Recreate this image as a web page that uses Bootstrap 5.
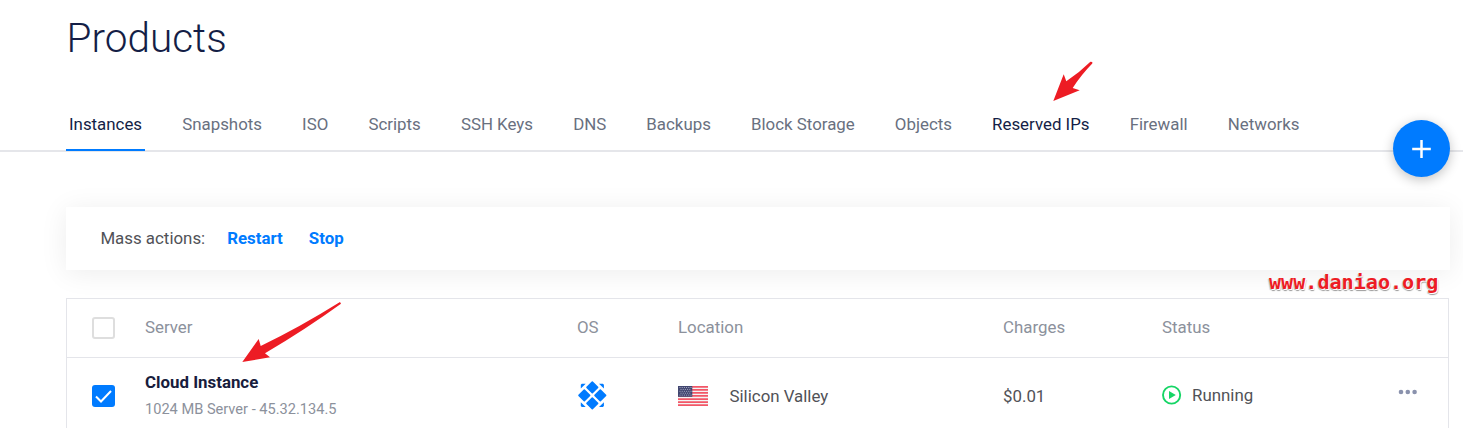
<!DOCTYPE html>
<html lang="en">
<head>
<meta charset="utf-8">
<title>Products</title>
<meta name="viewport" content="width=device-width, initial-scale=1">
<link href="https://cdn.jsdelivr.net/npm/bootstrap@5.3.0/dist/css/bootstrap.min.css" rel="stylesheet">
<style>
body{font-family:Roboto,sans-serif;font-size:16.87px;line-height:24px;color:#515257;background:#fff;height:428px;overflow:hidden}
.page-title{font-size:40.5px;font-weight:300;line-height:50px;color:#141e46;padding:13px 0 0 66.6px}
.tabs{height:60px;margin-top:29px;padding-left:66px;border-bottom:2px solid #e5e6ea;gap:34.13px}
.tabs .nav-link{color:#69707f;padding:20px 3px 0;height:59px;white-space:nowrap}
.tabs .nav-link.active{color:#141e46;border-bottom:2px solid #007bff}
.tabs .nav-link.hovered{color:#141e46}
.fab{left:1393px;top:120px;width:57px;height:57px;background:#007bff;box-shadow:0 3px 12px rgba(0,0,0,.24)}
.mass{margin:55px 13px 0 66px;height:63px;padding:0 0 2px 34.4px;background:#fff;box-shadow:0 3px 28px rgba(0,0,0,.075)}
.mass a{color:#007bff;font-weight:700;text-decoration:none}
.servers{margin:28px 14px 0 66px;border:1px solid #e4e5ea;border-bottom:0;height:130px;background:#fff}
.server-row{display:grid;grid-template-columns:53px 432px 101px 325px 159px 1fr 40px;padding-left:25px;align-items:center}
.server-head{height:59px;border-bottom:1px solid #e4e5ea;color:#8c919c}
.server-head .head-label{padding-bottom:2px}
.server-item{height:70px;padding-top:6px}
.tick{width:23px;height:22px;border-radius:3px}
.tick-off{border:2px solid #dedede}
.tick-on{background:#007bff}
.server-name{font-weight:700;color:#181d3d}
.server-info{font-size:14.6px;color:#8c919c;padding-top:3px;padding-bottom:1px}
.site-mark{left:1269px;top:270px;font:700 20.1px/25px "DejaVu Sans Mono",monospace;color:#ed1c24;text-shadow:0 0 1px #fff,1px 1px 0 #fff,-1px 1px 1px #bbb,1px 2px 1px #999}
</style>
<script src="https://cdn.jsdelivr.net/npm/bootstrap@5.3.0/dist/js/bootstrap.bundle.min.js"></script>
</head>
<body class="position-relative">
<h1 class="page-title mb-0">Products</h1>
<nav class="tabs nav flex-nowrap">
  <a class="nav-link active">Instances</a><a class="nav-link">Snapshots</a><a class="nav-link">ISO</a><a class="nav-link">Scripts</a><a class="nav-link">SSH Keys</a><a class="nav-link">DNS</a><a class="nav-link">Backups</a><a class="nav-link">Block Storage</a><a class="nav-link">Objects</a><a class="nav-link hovered">Reserved IPs</a><a class="nav-link">Firewall</a><a class="nav-link">Networks</a>
</nav>
<section class="mass d-flex align-items-center"><span>Mass actions:</span><a style="margin-left:22px" href="#">Restart</a><a style="margin-left:26px" href="#">Stop</a></section>
<section class="servers">
  <div class="server-row server-head">
    <div class="tick tick-off"></div><div class="head-label">Server</div><div class="head-label">OS</div><div class="head-label">Location</div><div class="head-label">Charges</div><div class="head-label">Status</div><div></div>
  </div>
  <div class="server-row server-item">
    <div class="tick tick-on d-flex"><svg width="23" height="22" viewBox="0 0 23 22"><path d="M4 11.5l5 5L19 6" fill="none" stroke="#fff" stroke-width="2"/></svg></div>
    <div><div class="server-name">Cloud Instance</div><div class="server-info">1024 MB Server - 45.32.134.5</div></div>
    <div class="d-flex" style="padding-bottom:2px"><svg width="30" height="30" viewBox="0 0 30 30" fill="#007bff"><g stroke="#007bff" stroke-width="1.6" stroke-linejoin="round"><path d="M15.3 2.1l5.3 5.3-5.3 5.3L10 7.4zM15.3 18.1l5.3 5.3-5.3 5.3-5.3-5.3zM7.3 10.1l5.3 5.3-5.3 5.3L2 15.4zM23.3 10.1l5.3 5.3-5.3 5.3-5.3-5.3z"/></g><path d="M4.8 3.7h3.9L3.8 8.6V4.7zM22 3.7h3.9l1 1v3.9zM3.8 22.2l4.9 4.9H4.8l-1-1zM26.9 22.2v3.9l-1 1H22z"/></svg></div>
    <div class="d-flex align-items-center"><svg width="30" height="20" viewBox="0 0 30 20"><path fill="#f4f4f4" d="M0 0h30v20H0z"/><path stroke="#f25767" stroke-width="1.8" d="M0 .9h30M0 3.9h30M0 6.9h30M0 9.9h30M0 13.1h30M0 16.1h30M0 19.1h30"/><path fill="#414670" d="M0 0h14.3v10.8H0z"/><path stroke="#b9bbd0" stroke-width=".9" stroke-dasharray="1 1.2" d="M1.5 1.5h12M2.5 3.4h10M1.5 5.3h12M2.5 7.2h10M1.5 9.1h12"/></svg><span style="margin-left:21.5px">Silicon Valley</span></div>
    <div>$0.01</div>
    <div class="d-flex align-items-center"><svg width="20" height="20" viewBox="0 0 20 20" style="margin-top:-3px"><circle cx="9.6" cy="10" r="8.6" fill="none" stroke="#15d565" stroke-width="1.9"/><path fill="#15d565" d="M7 6l6.8 4L7 14z"/></svg><span style="margin-left:10px;margin-top:-2px">Running</span></div>
    <div><svg class="d-block" style="margin:-7px 0 0 -10px" width="20" height="6" viewBox="0 0 20 6" fill="#8a92ad"><circle cx="3" cy="3" r="2.3"/><circle cx="9.8" cy="3" r="2.3"/><circle cx="16.6" cy="3" r="2.3"/></svg></div>
  </div>
</section>
<div class="fab position-absolute rounded-circle"><svg class="d-block" width="57" height="57" viewBox="0 0 57 57"><path d="M28.5 20v18M19.2 29h18.6" stroke="#fff" stroke-width="2.5"/></svg></div>
<div class="site-mark position-absolute">www.daniao.org</div>
<svg class="position-absolute top-0 start-0 pe-none" width="1463" height="428" viewBox="0 0 1463 428" fill="#ed1c24"><path d="M1053.3 101l10.4-26.7 2.6 7Q1079 73 1090.4 61.8l1.9.2v1.5Q1081 75 1072.7 88l7 2.3z"/><path d="M242.3 362l16.4-23 2 7Q300 327 340 302l1 1.7Q306 329 265 353.3l5 4z"/></svg>
</body>
</html>
